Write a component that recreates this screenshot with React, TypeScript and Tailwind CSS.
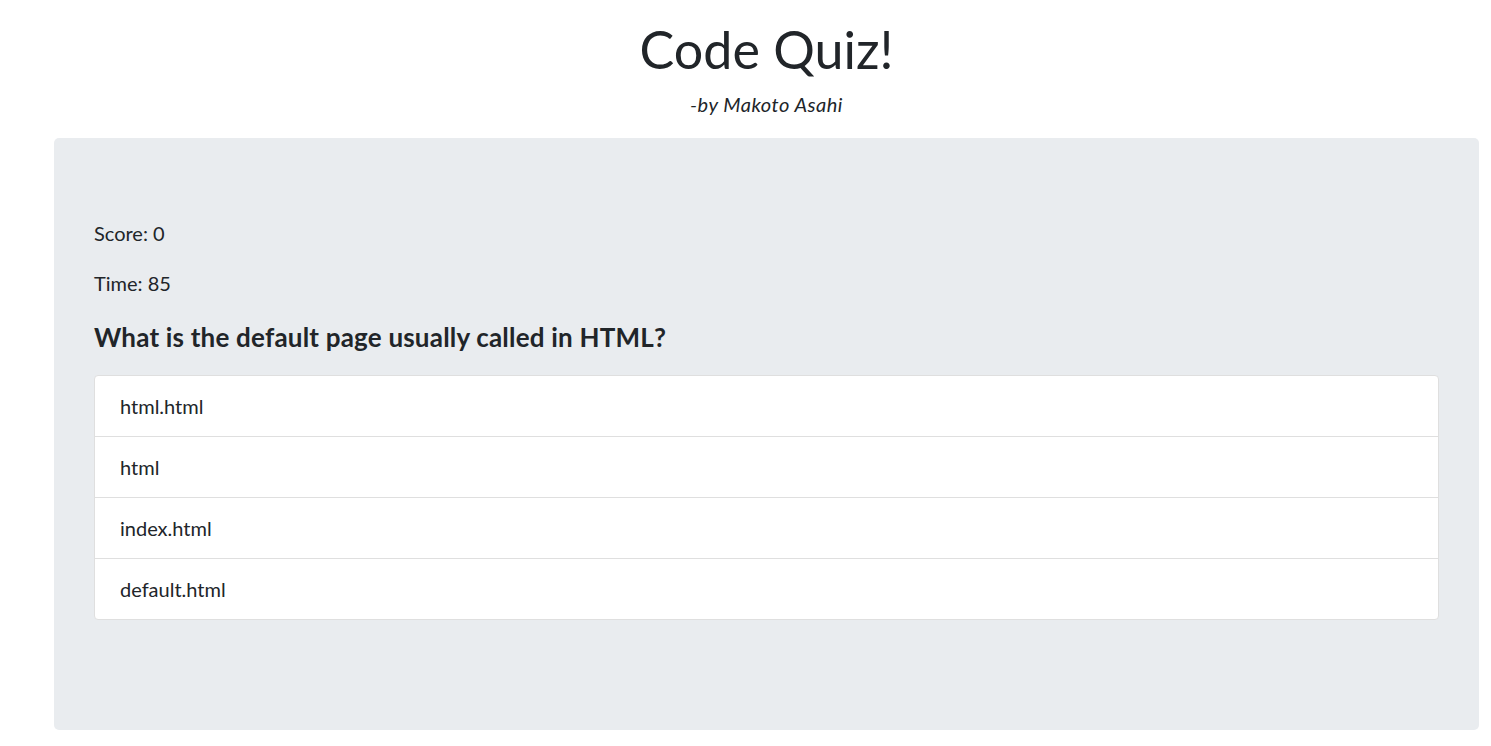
import React from 'react';

const answers = ['html.html', 'html', 'index.html', 'default.html'];

const App: React.FC = () => {
  return (
    <div className="min-h-screen bg-white text-[#212529] font-['Lato',sans-serif]">
      <div className="ml-[54px] w-[1425px]">
        <header className="pt-[18px] text-center">
          <h1 className="text-[52px] leading-[62px] font-normal">Code Quiz!</h1>
          <p className="mt-[9px] text-[20px] leading-[30px] italic tracking-[0.5px]">-by Makoto Asahi</p>
        </header>

        {/* Quiz card */}
        <section className="mt-[19px] rounded-[5px] bg-[#e9ecef] px-10 pt-20 pb-[110px]">
          <p className="text-[20px] leading-[30px]">Score: 0</p>
          <p className="mt-5 text-[20px] leading-[30px]">Time: 85</p>
          <h2 className="mt-[24px] text-[26px] leading-[31px] font-bold tracking-[0.2px]">
            What is the default page usually called in HTML?
          </h2>
          <ul className="mt-[22px] overflow-hidden rounded-[4px] border border-[#dfdfdf] bg-white">
            {answers.map((a, i) => (
              <li
                key={a}
                className={
                  'px-[25px] py-[15px] text-[20px] leading-[30px] ' +
                  (i > 0 ? 'border-t border-[#dfdfdf]' : '')
                }
              >
                {a}
              </li>
            ))}
          </ul>
        </section>
      </div>
    </div>
  );
};

export default App;
